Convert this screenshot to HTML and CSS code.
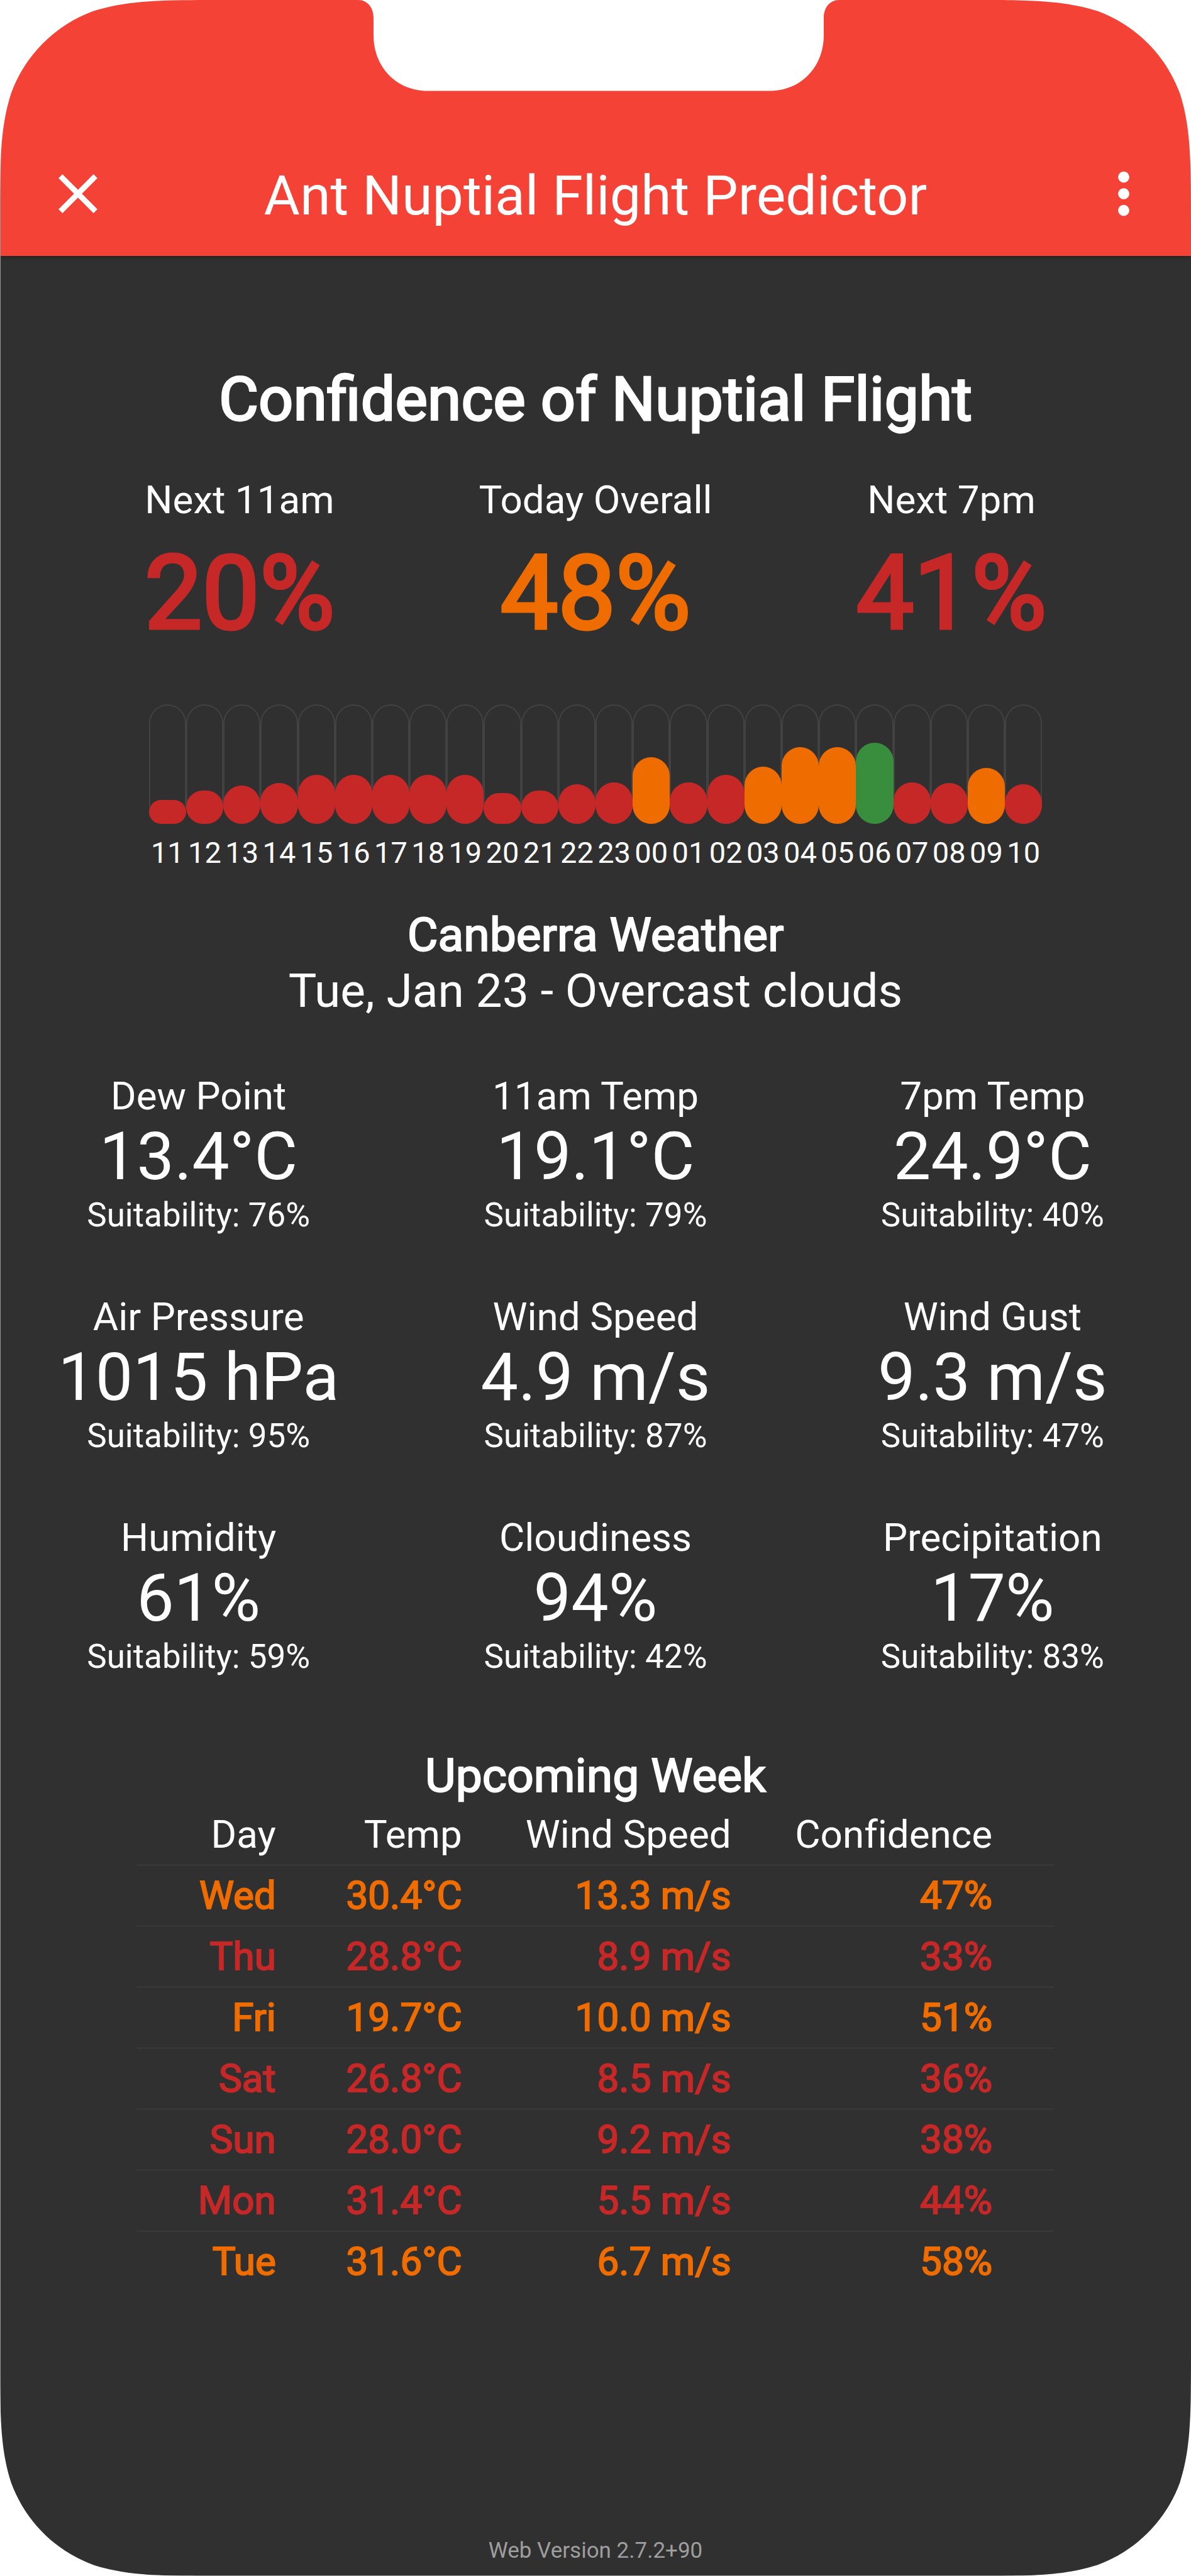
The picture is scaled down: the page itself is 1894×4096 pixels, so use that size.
FILE: index.html
```html
<!DOCTYPE html>
<html lang="en">
<head>
<meta charset="utf-8">
<meta name="viewport" content="width=device-width, initial-scale=1">
<title>Ant Nuptial Flight Predictor</title>
<link rel="stylesheet" href="styles.css">
</head>
<body>
<div class="phone">
  <header class="app-bar">
    <button class="icon-button" type="button" aria-label="Close">
      <svg class="icon" viewBox="0 0 24 24" aria-hidden="true"><path d="M19 6.41L17.59 5 12 10.59 6.41 5 5 6.41 10.59 12 5 17.59 6.41 19 12 13.41 17.59 19 19 17.59 13.41 12z"/></svg>
    </button>
    <h1 class="app-title">Ant Nuptial Flight Predictor</h1>
    <button class="icon-button menu-button" type="button" aria-label="More options">
      <svg class="icon" viewBox="0 0 24 24" aria-hidden="true"><path d="M12 8c1.1 0 2-.9 2-2s-.9-2-2-2-2 .9-2 2 .9 2 2 2zm0 2c-1.1 0-2 .9-2 2s.9 2 2 2 2-.9 2-2-.9-2-2-2zm0 6c-1.1 0-2 .9-2 2s.9 2 2 2 2-.9 2-2-.9-2-2-2z"/></svg>
    </button>
  </header>

  <main class="content">
    <section class="confidence">
      <h2 class="heading-large">Confidence of Nuptial Flight</h2>
      <div class="scores">
        <div class="score"><p class="label">Next 11am</p><p class="percent low">20%</p></div>
        <div class="score"><p class="label">Today Overall</p><p class="percent medium">48%</p></div>
        <div class="score"><p class="label">Next 7pm</p><p class="percent low">41%</p></div>
      </div>
      <ol class="chart">
        <li class="hour"><div class="track"><div class="bar low" style="height:20%"></div></div>11</li>
        <li class="hour"><div class="track"><div class="bar low" style="height:28%"></div></div>12</li>
        <li class="hour"><div class="track"><div class="bar low" style="height:32%"></div></div>13</li>
        <li class="hour"><div class="track"><div class="bar low" style="height:34%"></div></div>14</li>
        <li class="hour"><div class="track"><div class="bar low" style="height:41%"></div></div>15</li>
        <li class="hour"><div class="track"><div class="bar low" style="height:41%"></div></div>16</li>
        <li class="hour"><div class="track"><div class="bar low" style="height:41%"></div></div>17</li>
        <li class="hour"><div class="track"><div class="bar low" style="height:41%"></div></div>18</li>
        <li class="hour"><div class="track"><div class="bar low" style="height:41%"></div></div>19</li>
        <li class="hour"><div class="track"><div class="bar low" style="height:26%"></div></div>20</li>
        <li class="hour"><div class="track"><div class="bar low" style="height:28%"></div></div>21</li>
        <li class="hour"><div class="track"><div class="bar low" style="height:33%"></div></div>22</li>
        <li class="hour"><div class="track"><div class="bar low" style="height:35%"></div></div>23</li>
        <li class="hour"><div class="track"><div class="bar medium" style="height:56%"></div></div>00</li>
        <li class="hour"><div class="track"><div class="bar low" style="height:35%"></div></div>01</li>
        <li class="hour"><div class="track"><div class="bar low" style="height:41%"></div></div>02</li>
        <li class="hour"><div class="track"><div class="bar medium" style="height:48%"></div></div>03</li>
        <li class="hour"><div class="track"><div class="bar medium" style="height:64%"></div></div>04</li>
        <li class="hour"><div class="track"><div class="bar medium" style="height:64%"></div></div>05</li>
        <li class="hour"><div class="track"><div class="bar high" style="height:68%"></div></div>06</li>
        <li class="hour"><div class="track"><div class="bar low" style="height:35%"></div></div>07</li>
        <li class="hour"><div class="track"><div class="bar low" style="height:34%"></div></div>08</li>
        <li class="hour"><div class="track"><div class="bar medium" style="height:47%"></div></div>09</li>
        <li class="hour"><div class="track"><div class="bar low" style="height:33%"></div></div>10</li>
      </ol>
    </section>

    <section class="weather">
      <h2 class="heading">Canberra Weather</h2>
      <p class="subtitle">Tue, Jan 23 - Overcast clouds</p>
      <div class="metrics">
        <div class="metric"><p class="label">Dew Point</p><p class="value">13.4°C</p><p class="suitability">Suitability: 76%</p></div>
        <div class="metric"><p class="label">11am Temp</p><p class="value">19.1°C</p><p class="suitability">Suitability: 79%</p></div>
        <div class="metric"><p class="label">7pm Temp</p><p class="value">24.9°C</p><p class="suitability">Suitability: 40%</p></div>
        <div class="metric"><p class="label">Air Pressure</p><p class="value">1015 hPa</p><p class="suitability">Suitability: 95%</p></div>
        <div class="metric"><p class="label">Wind Speed</p><p class="value">4.9 m/s</p><p class="suitability">Suitability: 87%</p></div>
        <div class="metric"><p class="label">Wind Gust</p><p class="value">9.3 m/s</p><p class="suitability">Suitability: 47%</p></div>
        <div class="metric"><p class="label">Humidity</p><p class="value">61%</p><p class="suitability">Suitability: 59%</p></div>
        <div class="metric"><p class="label">Cloudiness</p><p class="value">94%</p><p class="suitability">Suitability: 42%</p></div>
        <div class="metric"><p class="label">Precipitation</p><p class="value">17%</p><p class="suitability">Suitability: 83%</p></div>
      </div>
    </section>

    <section class="week">
      <h2 class="heading" id="week-heading">Upcoming Week</h2>
      <table class="forecast" aria-labelledby="week-heading">
        <colgroup><col class="col-day"><col class="col-temp"><col class="col-wind"><col></colgroup>
        <thead>
          <tr><th scope="col">Day</th><th scope="col">Temp</th><th scope="col">Wind Speed</th><th scope="col">Confidence</th></tr>
        </thead>
        <tbody>
          <tr class="medium"><td>Wed</td><td>30.4°C</td><td>13.3 m/s</td><td>47%</td></tr>
          <tr class="low"><td>Thu</td><td>28.8°C</td><td>8.9 m/s</td><td>33%</td></tr>
          <tr class="medium"><td>Fri</td><td>19.7°C</td><td>10.0 m/s</td><td>51%</td></tr>
          <tr class="low"><td>Sat</td><td>26.8°C</td><td>8.5 m/s</td><td>36%</td></tr>
          <tr class="low"><td>Sun</td><td>28.0°C</td><td>9.2 m/s</td><td>38%</td></tr>
          <tr class="low"><td>Mon</td><td>31.4°C</td><td>5.5 m/s</td><td>44%</td></tr>
          <tr class="medium"><td>Tue</td><td>31.6°C</td><td>6.7 m/s</td><td>58%</td></tr>
        </tbody>
      </table>
    </section>
  </main>

  <footer class="version">Web Version 2.7.2+90</footer>

  <div class="edge"></div>
  <svg class="notch" viewBox="0 0 764 145" aria-hidden="true"><path d="M0 0C14 0 24 12 24 28V56C24 106 60 144.500 110 144.500H654C704 144.500 740 106 740 56V28C740 12 750 0 764 0Z"/></svg>
  <svg class="corner top left" viewBox="0 0 360 360" aria-hidden="true"><path d="M0 0H360C256.400 0 204.600 0 148.800 17.600C87.800 39.800 39.800 87.800 17.600 148.800C0 204.600 0 256.400 0 360Z"/></svg>
  <svg class="corner top right" viewBox="0 0 360 360" aria-hidden="true"><path d="M0 0H360C256.400 0 204.600 0 148.800 17.600C87.800 39.800 39.800 87.800 17.600 148.800C0 204.600 0 256.400 0 360Z"/></svg>
  <svg class="corner bottom left" viewBox="0 0 360 360" aria-hidden="true"><path d="M0 0H360C256.400 0 204.600 0 148.800 17.600C87.800 39.800 39.800 87.800 17.600 148.800C0 204.600 0 256.400 0 360Z"/></svg>
  <svg class="corner bottom right" viewBox="0 0 360 360" aria-hidden="true"><path d="M0 0H360C256.400 0 204.600 0 148.800 17.600C87.800 39.800 39.800 87.800 17.600 148.800C0 204.600 0 256.400 0 360Z"/></svg>
</div>
</body>
</html>
```
FILE: styles.css
```css
:root {
  --surface: #303030;
  --line: #424242;
  --primary: #f44336;
  --low: #c62828;
  --medium: #ef6c00;
  --high: #388e3c;
}

* {
  box-sizing: border-box;
}

body {
  margin: 0;
  background: #fff;
  color: #fff;
  font-family: Roboto, "Liberation Sans", sans-serif;
  font-weight: 400;
}

h1, h2, p, ol {
  margin: 0;
  padding: 0;
  font-weight: 400;
}

.phone {
  position: relative;
  display: flex;
  flex-direction: column;
  min-height: 100vh;
  background: var(--surface);
  overflow: hidden;
}

/* App bar */

.app-bar {
  display: grid;
  grid-template-columns: 1fr auto 1fr;
  align-items: center;
  padding: 214px 54px 0;
  height: 407px;
  background: var(--primary);
  box-shadow: 0 2px 6px rgba(0, 0, 0, 0.3);
}

.app-title {
  font-size: 88px;
  line-height: 104px;
}

.icon-button {
  justify-self: start;
  padding: 0 17px 6px;
  border: 0;
  background: none;
  color: inherit;
}

.menu-button {
  justify-self: end;
  padding-right: 0;
}

.icon {
  display: block;
  width: 106px;
  height: 106px;
  fill: currentColor;
}

/* Confidence */

.content {
  display: flex;
  flex-direction: column;
  text-align: center;
}

.confidence {
  padding-top: 170px;
}

.heading-large {
  font-size: 97px;
  line-height: 116px;
  -webkit-text-stroke: 3px currentColor;
}

.scores {
  display: grid;
  grid-template-columns: repeat(3, 1fr);
  padding: 66px 98px 0;
}

.label {
  font-size: 62px;
  line-height: 72px;
}

.percent {
  margin-top: 18px;
  font-size: 163px;
  line-height: 190px;
  -webkit-text-stroke: 5px currentColor;
}

.low {
  color: var(--low);
}

.medium {
  color: var(--medium);
}

.high {
  color: var(--high);
}

.chart {
  display: grid;
  grid-template-columns: repeat(24, 1fr);
  width: 75%;
  margin: 81px auto 0;
  list-style: none;
}

.hour {
  font-size: 47px;
  line-height: 56px;
}

.track {
  display: flex;
  align-items: flex-end;
  height: 190px;
  margin-bottom: 18px;
  border-radius: 30px;
  box-shadow: inset 0 0 0 2px var(--line);
}

.bar {
  width: 100%;
  border-radius: 30px;
  background: currentColor;
}

/* Weather */

.weather {
  padding-top: 58px;
}

.heading {
  font-size: 75px;
  line-height: 89px;
  -webkit-text-stroke: 2px currentColor;
}

.subtitle {
  font-size: 75px;
  line-height: 89px;
}

.metrics {
  display: grid;
  grid-template-columns: repeat(3, 1fr);
  row-gap: 93px;
  padding-top: 87px;
}

.value {
  font-size: 106px;
  line-height: 120px;
}

.suitability {
  font-size: 53px;
  line-height: 66px;
}

/* Upcoming week */

.week {
  padding-top: 112px;
}

.forecast {
  width: 77%;
  margin: 0 auto;
  table-layout: fixed;
  border-collapse: separate;
  border-spacing: 0;
  font-size: 62px;
  line-height: 72px;
  text-align: right;
}

.col-day {
  width: 221px;
}

.col-temp {
  width: 296px;
}

.col-wind {
  width: 428px;
}

.forecast th,
.forecast td {
  height: 97px;
  padding: 0;
  font-weight: 400;
}

.forecast th {
  font-variant-ligatures: none;
}

.forecast td {
  border-top: 1px solid var(--line);
  -webkit-text-stroke: 2px currentColor;
}

.forecast th:last-child,
.forecast td:last-child {
  padding-right: 98px;
}

/* Footer */

.version {
  margin-top: auto;
  padding-bottom: 19px;
  color: #9e9e9e;
  font-size: 35px;
  line-height: 42px;
  text-align: center;
}

/* Device outline and cut-outs */

.edge {
  position: absolute;
  inset: 0;
  border: solid #979797;
  border-width: 0 0 1px 1px;
  pointer-events: none;
}

.notch {
  position: absolute;
  top: 0;
  left: 50%;
  width: 764px;
  height: 145px;
  margin-left: -377px;
  fill: #fff;
}

.corner {
  position: absolute;
  width: 360px;
  height: 360px;
  fill: #fff;
}

.top {
  top: 0;
}

.bottom {
  bottom: 0;
}

.left {
  left: 0;
}

.right {
  right: 0;
}

.top.right {
  transform: scaleX(-1);
}

.bottom.left {
  transform: scaleY(-1);
}

.bottom.right {
  transform: rotate(180deg);
}
```
